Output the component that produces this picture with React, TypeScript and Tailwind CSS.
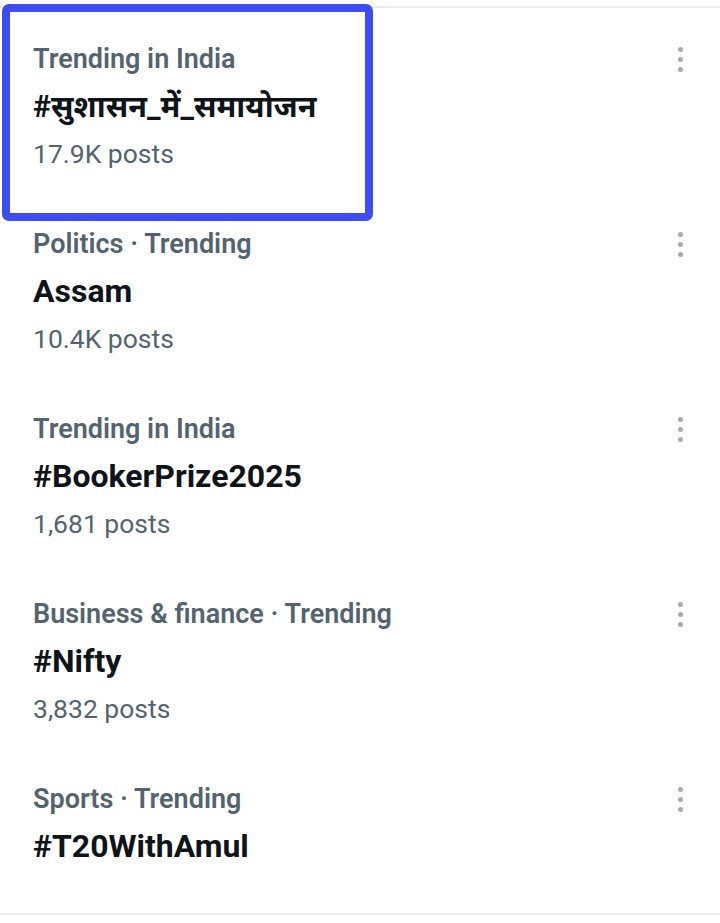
import { ReactNode } from "react";

type Trend = {
  category: string;
  title: string;
  posts?: string;
  hindi?: boolean;
};

const trends: Trend[] = [
  { category: "Trending in India", title: "#सुशासन_में_समायोजन", posts: "17.9K posts", hindi: true },
  { category: "Politics · Trending", title: "Assam", posts: "10.4K posts" },
  { category: "Trending in India", title: "#BookerPrize2025", posts: "1,681 posts" },
  { category: "Business & finance · Trending", title: "#Nifty", posts: "3,832 posts" },
  { category: "Sports · Trending", title: "#T20WithAmul" },
];

function MoreDots() {
  return (
    <div className="flex h-[47px] w-[14px] flex-col items-center justify-center gap-[5px]">
      <span className="h-[5px] w-[5px] rounded-full bg-[#a3abb2]" />
      <span className="h-[5px] w-[5px] rounded-full bg-[#a3abb2]" />
      <span className="h-[5px] w-[5px] rounded-full bg-[#a3abb2]" />
    </div>
  );
}

function TrendRow({ trend, last, children }: { trend: Trend; last?: boolean; children?: ReactNode }) {
  return (
    <div className={`relative flex items-start pl-[33px] pr-[33px] pt-[28px] ${last ? "pb-[43px]" : "pb-[16px]"}`}>
      <div className="flex-1">
        <div className="text-[27px] font-semibold leading-[47px] text-[#536471]">{trend.category}</div>
        <div className={`${trend.hindi ? "text-[30.5px]" : "text-[32px]"} font-bold leading-[47px] text-[#0f1419]`}>
          {trend.title}
        </div>
        {trend.posts && <div className="text-[26.5px] leading-[47px] text-[#536471]">{trend.posts}</div>}
      </div>
      <MoreDots />
      {children}
    </div>
  );
}

export default function App() {
  return (
    <div
      className="min-h-[923px] w-[720px] bg-white pt-[6px]"
      style={{ fontFamily: 'Roboto, "Noto Sans", "Noto Sans Devanagari", sans-serif' }}
    >
      <div className="relative border-y-2 border-[#e9eaeb]">
        {trends.map((t, i) => (
          <TrendRow key={i} trend={t} last={i === trends.length - 1} />
        ))}
        {/* highlight box around first trend */}
        <div className="pointer-events-none absolute left-[2px] top-[-4px] h-[217px] w-[371px] rounded-[7px] border-[8px] border-[#3d4cf5]" />
      </div>
    </div>
  );
}
